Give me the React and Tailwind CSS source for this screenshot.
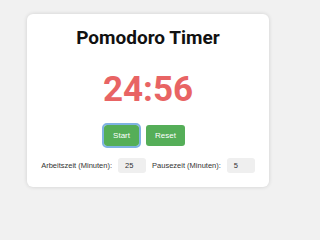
export default function App() {
  return (
    <div className="min-h-screen w-full bg-[#f1f1f1] pt-[14px]">
      <div className="ml-[27px] w-[242px] rounded-[6px] bg-white pt-[14px] pb-[14px] shadow-[0_0_4px_rgba(0,0,0,0.14)]">
        <h1 className="text-center font-['Roboto',sans-serif] text-[19px] font-bold leading-[19px] text-[#111]">
          Pomodoro Timer
        </h1>
        <div className="mt-[25px] text-center font-['Roboto',sans-serif] text-[35px] font-bold leading-[36px] text-[#e86464]">
          24:56
        </div>
        <div className="mt-[17px] flex justify-center font-['Liberation_Sans',Arial,sans-serif] text-[8px] text-white">
          <button className="mr-[7px] h-[21px] rounded-[3px] bg-[#55ae58] px-[9px] outline-2 outline-offset-0 outline-[#7fb2e3]">
            Start
          </button>
          <button className="mr-[7px] h-[21px] rounded-[3px] bg-[#55ae58] px-[9px]">
            Reset
          </button>
        </div>
        <div className="mt-[12px] flex items-center justify-center font-['Liberation_Sans',Arial,sans-serif] text-[7.5px] text-[#333]">
          <span>Arbeitszeit (Minuten):</span>
          <div className="ml-[6px] flex h-[15px] w-[28px] items-center rounded-[3px] bg-[#efefef] pl-[7px]">25</div>
          <span className="ml-[6px]">Pausezeit (Minuten):</span>
          <div className="ml-[6px] flex h-[15px] w-[28px] items-center rounded-[3px] bg-[#efefef] pl-[7px]">5</div>
        </div>
      </div>
    </div>
  )
}
